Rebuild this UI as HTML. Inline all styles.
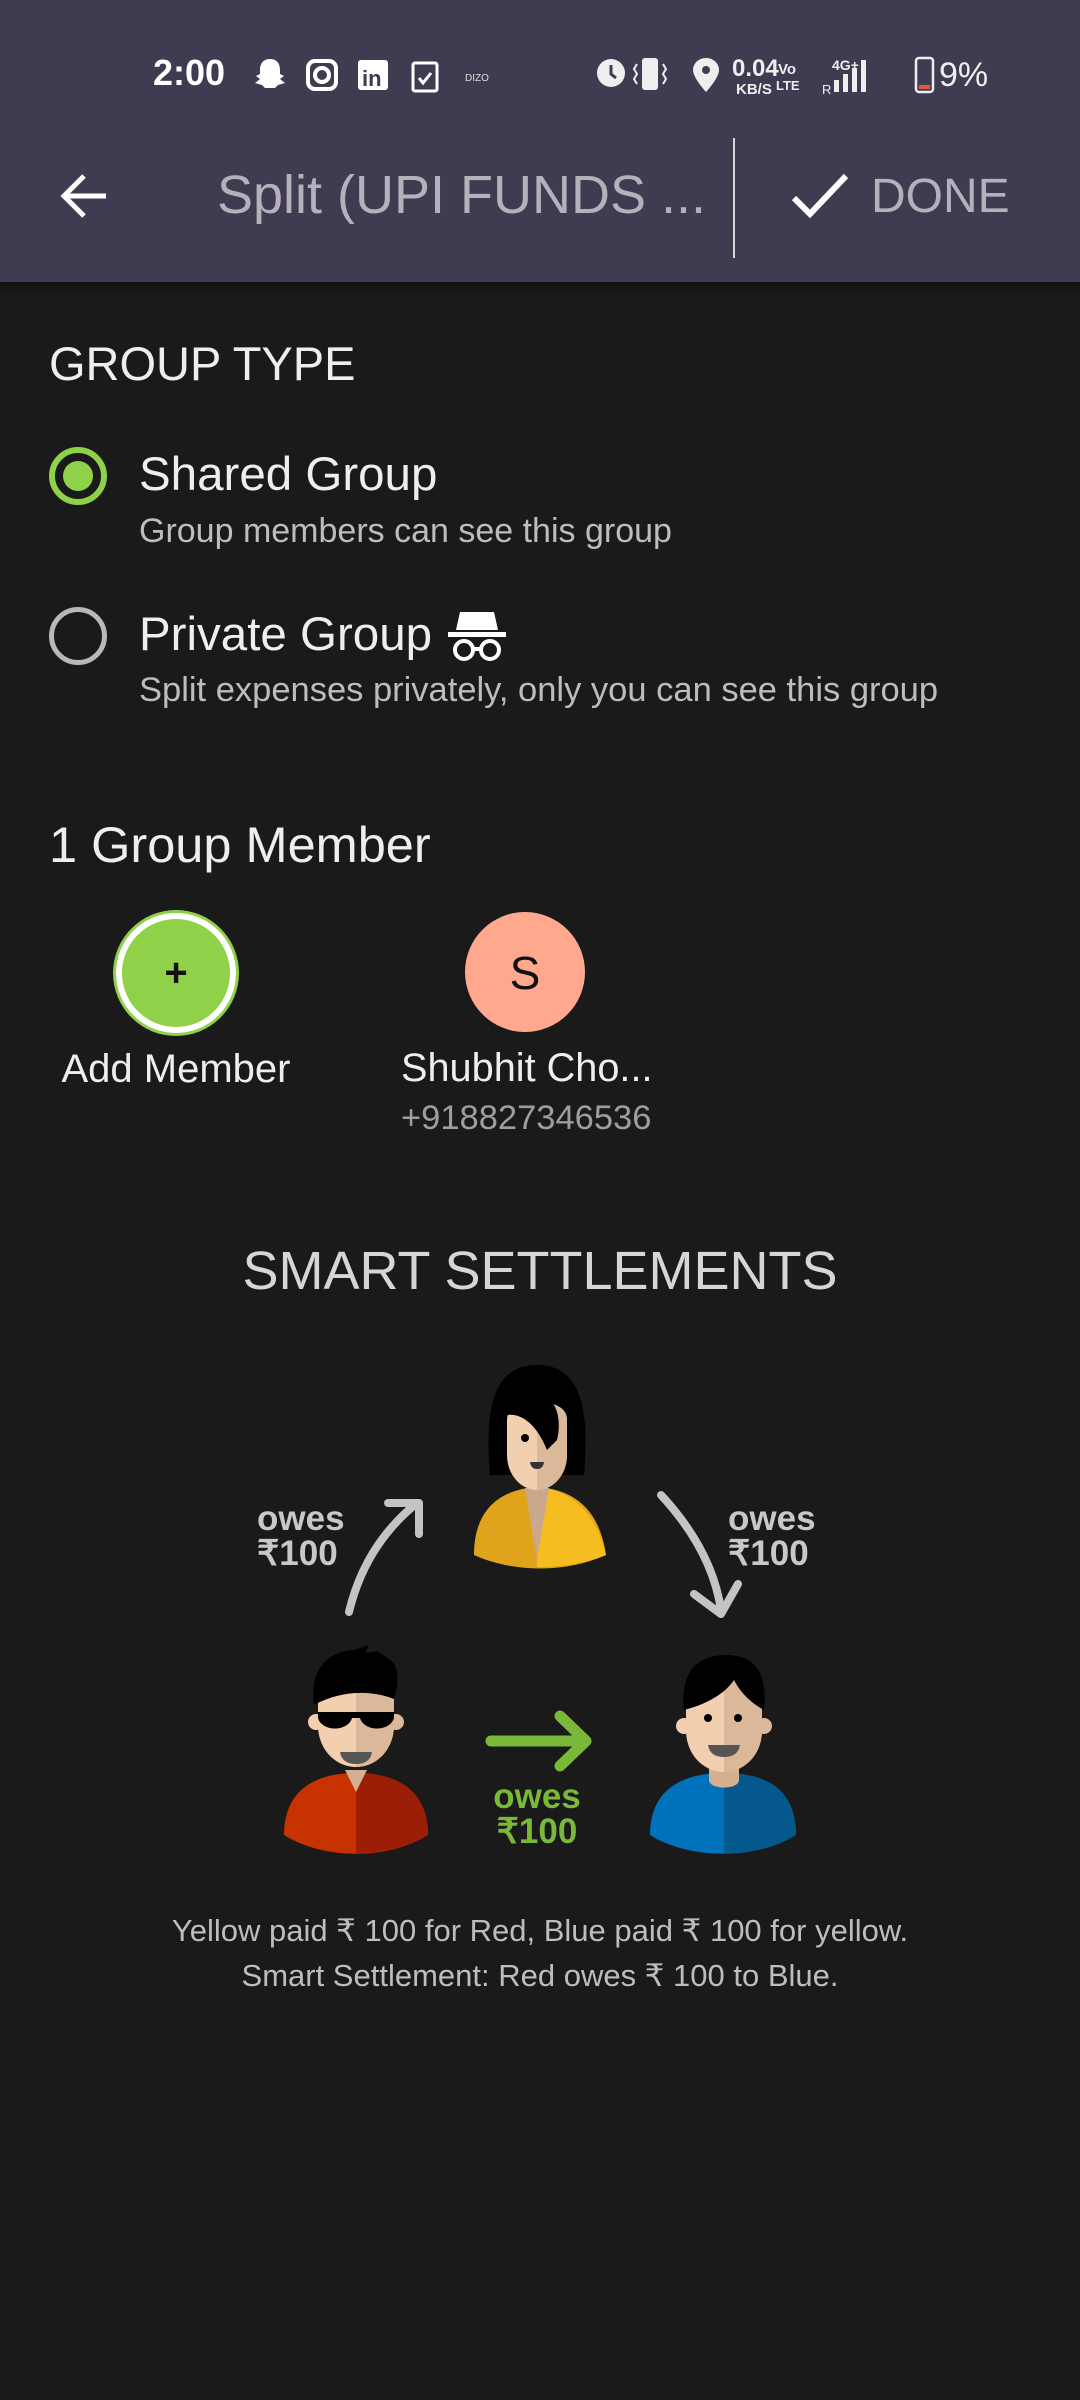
<!DOCTYPE html>
<html><head><meta charset="utf-8"><style>
*{margin:0;padding:0;box-sizing:border-box}
body{width:1080px;height:2400px;background:#1a1a1a;font-family:"Liberation Sans",sans-serif;position:relative;overflow:hidden;color:#e8e8e8}
.t{position:absolute;white-space:nowrap;line-height:1}
.bar{position:absolute;left:0;top:0;width:1080px;height:282px;background:#413b52}
.shadow{position:absolute;left:0;top:282px;width:1080px;height:14px;background:linear-gradient(#101010,#1a1a1a)}
</style></head><body>
<div class="bar"></div><div class="shadow"></div>
<!-- status bar -->
<div class="t" style="left:153px;top:55px;font-size:36px;color:#fff;font-weight:bold">2:00</div>
<svg style="position:absolute;left:250px;top:55px" width="240" height="40" viewBox="0 0 240 40">
 <path d="M20 4c-7 0-10 5-10 11v4l-4 2 4 3-5 4 7 2 3 3h10l3-3 7-2-5-4 4-3-4-2v-4c0-6-3-11-10-11z" fill="#fff"/>
 <rect x="58" y="6" width="28" height="28" rx="7" fill="none" stroke="#fff" stroke-width="4"/><circle cx="72" cy="20" r="7" fill="none" stroke="#fff" stroke-width="4"/>
 <rect x="108" y="5" width="30" height="30" rx="3" fill="#fff"/><text x="112" y="31" font-size="22" font-weight="bold" fill="#413b52" font-family="Liberation Sans">in</text>
 <rect x="163" y="8" width="24" height="28" rx="2" fill="none" stroke="#fff" stroke-width="3"/><path d="M169 23l4 5 8-10" stroke="#fff" stroke-width="3" fill="none"/>
 <text x="215" y="26" font-size="10" fill="#ddd" font-family="Liberation Sans">DIZO</text>
</svg>
<svg style="position:absolute;left:592px;top:52px" width="400" height="46" viewBox="0 0 400 46">
 <circle cx="19" cy="21" r="14" fill="#eee"/><path d="M19 13v9l5 4" stroke="#413b52" stroke-width="3" fill="none"/>
 <rect x="50" y="6" width="16" height="32" rx="3" fill="#eee"/><path d="M45 12l-3 5 3 5-3 5 3 5M71 12l3 5-3 5 3 5-3 5" stroke="#eee" stroke-width="2" fill="none"/>
 <path d="M114 6c-8 0-13 6-13 12 0 8 13 22 13 22s13-14 13-22c0-6-5-12-13-12z" fill="#eee"/><circle cx="114" cy="18" r="4" fill="#413b52"/>
 <text x="140" y="24" font-size="24" font-weight="bold" fill="#eee" font-family="Liberation Sans">0.04</text>
 <text x="144" y="42" font-size="15" font-weight="bold" fill="#eee" font-family="Liberation Sans">KB/S</text>
 <text x="186" y="22" font-size="15" font-weight="bold" fill="#eee" font-family="Liberation Sans">Vo</text>
 <text x="184" y="38" font-size="13" font-weight="bold" fill="#eee" font-family="Liberation Sans">LTE</text>
 <text x="230" y="42" font-size="13" fill="#eee" font-family="Liberation Sans">R</text>
 <text x="240" y="18" font-size="14" font-weight="bold" fill="#eee" font-family="Liberation Sans">4G+</text>
 <rect x="242" y="28" width="5" height="12" fill="#eee"/><rect x="251" y="22" width="5" height="18" fill="#eee"/><rect x="260" y="16" width="5" height="24" fill="#eee"/><rect x="269" y="8" width="5" height="32" fill="#eee"/>
 <rect x="324" y="6" width="17" height="34" rx="3" fill="none" stroke="#eee" stroke-width="2.5"/><rect x="327" y="33" width="11" height="4" fill="#e05a3a"/>
 <text x="347" y="34" font-size="34" fill="#eee" font-family="Liberation Sans">9%</text>
</svg>
<!-- toolbar -->
<svg style="position:absolute;left:58px;top:172px" width="52" height="48" viewBox="0 0 52 48"><path d="M48 24H6M26 4L6 24l20 20" stroke="#fff" stroke-width="5" fill="none"/></svg>
<div class="t" style="left:217px;top:168px;font-size:54px;color:#b4b1bb">Split (UPI FUNDS ...</div>
<div style="position:absolute;left:733px;top:138px;width:2px;height:120px;background:#d8d6dc"></div>
<svg style="position:absolute;left:790px;top:170px" width="60" height="52" viewBox="0 0 60 52"><path d="M4 28l16 16L56 6" stroke="#fff" stroke-width="6" fill="none"/></svg>
<div class="t" style="left:871px;top:173px;font-size:48px;color:#b4b1bb">DONE</div>
<!-- group type -->
<div class="t" style="left:49px;top:340px;font-size:47px;color:#eee">GROUP TYPE</div>
<div style="position:absolute;left:49px;top:447px;width:58px;height:58px;border-radius:50%;border:6px solid #8fd24a"></div>
<div style="position:absolute;left:63px;top:461px;width:30px;height:30px;border-radius:50%;background:#8fd24a"></div>
<div class="t" style="left:139px;top:451px;font-size:47.5px;color:#eee">Shared Group</div>
<div class="t" style="left:139px;top:514px;font-size:34px;color:#bdbdbd">Group members can see this group</div>
<div style="position:absolute;left:49px;top:607px;width:58px;height:58px;border-radius:50%;border:5px solid #b8b8b8"></div>
<div class="t" style="left:139px;top:611px;font-size:47.5px;color:#eee">Private Group</div>
<svg style="position:absolute;left:446px;top:608px" width="62" height="56" viewBox="0 0 62 56"><path d="M14 4h34l4 18H10z" fill="#fff"/><rect x="2" y="24" width="58" height="5" fill="#fff"/><circle cx="18" cy="42" r="9" fill="none" stroke="#fff" stroke-width="4"/><circle cx="44" cy="42" r="9" fill="none" stroke="#fff" stroke-width="4"/><path d="M27 41h8" stroke="#fff" stroke-width="4"/></svg>
<div class="t" style="left:139px;top:673px;font-size:34.5px;color:#bdbdbd">Split expenses privately, only you can see this group</div>
<!-- members -->
<div class="t" style="left:49px;top:820px;font-size:50.5px;color:#eee">1 Group Member</div>
<div style="position:absolute;left:116px;top:913px;width:120px;height:120px;border-radius:50%;background:#8fd24a;border:6px solid #fff;box-shadow:0 0 0 3px #8fd24a"></div>
<div class="t" style="left:116px;top:953px;width:120px;text-align:center;font-size:40px;font-weight:bold;color:#111">+</div>
<div class="t" style="left:26px;top:1049px;width:300px;text-align:center;font-size:40px;color:#eee">Add Member</div>
<div style="position:absolute;left:465px;top:912px;width:120px;height:120px;border-radius:50%;background:#ffa88e"></div>
<div class="t" style="left:465px;top:950px;width:120px;text-align:center;font-size:46px;color:#111">S</div>
<div class="t" style="left:401px;top:1049px;font-size:39.7px;color:#eee">Shubhit Cho...</div>
<div class="t" style="left:401px;top:1101px;font-size:34.5px;color:#9e9e9e">+918827346536</div>
<!-- smart settlements -->
<div class="t" style="left:0;top:1244px;width:1080px;text-align:center;font-size:54px;color:#d6d6d6">SMART SETTLEMENTS</div>
<svg style="position:absolute;left:0;top:1330px" width="1080" height="580" viewBox="0 1330 1080 580" font-family="Liberation Sans">
 <!-- woman -->
 <path d="M490 1475c-5-60 0-110 47-110s52 50 47 110z" fill="#000"/>
 <path d="M474 1555c0-40 20-65 63-68 43 3 63 28 69 68-40 18-92 18-132 0z" fill="#e0a41c"/>
 <path d="M537 1487c28 2 58 20 69 68-20 8-45 12-69 12z" fill="#f6bd20"/>
 <path d="M525 1488l12 72 12-72z" fill="#c9a88e"/>
 <path d="M507 1420c0-12 12-18 30-18s30 6 30 18v35c0 20-14 35-30 35s-30-15-30-35z" fill="#f2cfae"/>
 <path d="M537 1402c18 0 30 6 30 18v35c0 20-14 35-30 35z" fill="#dcb89a"/>
 <path d="M507 1415c15-2 30 10 40 35l10-10c5-20 0-45-20-45-18 0-28 8-30 20z" fill="#000"/>
 <circle cx="525" cy="1438" r="4" fill="#000"/><path d="M530 1462h14q-1 7-7 7t-7-7z" fill="#333"/>
 <!-- arrows -->
 <path d="M349 1612Q365 1545 417 1503" stroke="#c4c4c4" stroke-width="8" fill="none" stroke-linecap="round"/>
 <path d="M388 1503h31v31" stroke="#c4c4c4" stroke-width="8" fill="none" stroke-linecap="round" stroke-linejoin="round"/>
 <path d="M661 1495Q712 1550 721 1610" stroke="#c4c4c4" stroke-width="8" fill="none" stroke-linecap="round"/>
 <path d="M694 1594l27 20 17-30" stroke="#c4c4c4" stroke-width="8" fill="none" stroke-linecap="round" stroke-linejoin="round"/>
 <text x="257" y="1530" font-size="35" font-weight="bold" fill="#c8c8c8">owes</text><text x="257" y="1565" font-size="35" font-weight="bold" fill="#c8c8c8">₹100</text>
 <text x="728" y="1530" font-size="35" font-weight="bold" fill="#c8c8c8">owes</text><text x="728" y="1565" font-size="35" font-weight="bold" fill="#c8c8c8">₹100</text>
 <path d="M491 1741h95M560 1716l26 25-26 25" stroke="#7ab83a" stroke-width="11" fill="none" stroke-linecap="round" stroke-linejoin="round"/>
 <text x="537" y="1808" font-size="35" font-weight="bold" fill="#7ab83a" text-anchor="middle">owes</text><text x="537" y="1843" font-size="35" font-weight="bold" fill="#7ab83a" text-anchor="middle">₹100</text>
 <!-- red man -->
 <path d="M284 1835c0-40 25-62 72-62s72 22 72 62c-40 25-104 25-144 0z" fill="#c83200"/>
 <path d="M356 1773c47 0 72 22 72 62-20 12-45 18-72 18z" fill="#9c1e06"/>
 <path d="M345 1770h22l-11 22z" fill="#d4b090"/>
 <circle cx="316" cy="1722" r="8" fill="#f2cfae"/><circle cx="396" cy="1722" r="8" fill="#dcb89a"/>
 <path d="M318 1690c0-22 16-30 38-30s38 8 38 30v35c0 25-18 42-38 42s-38-17-38-42z" fill="#f2cfae"/>
 <path d="M356 1660c22 0 38 8 38 30v35c0 25-18 42-38 42z" fill="#dcb89a"/>
 <path d="M314 1705c-6-40 20-55 40-55l15-5-4 8 12-2 15 10c8 10 6 25 2 38-20-8-50-10-80 6z" fill="#000"/>
 <path d="M318 1712h76v6c-4 14-30 14-34 0h-8c-4 14-30 14-34 0z" fill="#000"/>
 <path d="M340 1752h32q-2 12-16 12t-16-12z" fill="#555"/>
 <!-- blue man -->
 <path d="M650 1835c0-40 25-62 74-62s72 22 72 62c-40 25-106 25-146 0z" fill="#0072bc"/>
 <path d="M724 1773c47 0 72 22 72 62-20 12-45 18-72 18z" fill="#04588c"/>
 <path d="M709 1760h30v20c0 10-30 10-30 0z" fill="#d4b090"/>
 <circle cx="684" cy="1726" r="8" fill="#f2cfae"/><circle cx="764" cy="1726" r="8" fill="#dcb89a"/>
 <path d="M686 1700c0-25 16-35 38-35s38 10 38 35v30c0 25-18 42-38 42s-38-17-38-42z" fill="#f2cfae"/>
 <path d="M724 1665c22 0 38 10 38 35v30c0 25-18 42-38 42z" fill="#dcb89a"/>
 <path d="M684 1710c-4-40 15-55 42-55s42 15 38 55c-15-8-25-20-30-30-10 15-30 25-50 30z" fill="#000"/>
 <circle cx="708" cy="1718" r="4" fill="#000"/><circle cx="738" cy="1718" r="4" fill="#000"/>
 <path d="M708 1745h32q-2 12-16 12t-16-12z" fill="#555"/>
</svg>
<div class="t" style="left:0;top:1915px;width:1080px;text-align:center;font-size:31px;color:#bdbdbd">Yellow paid ₹ 100 for Red, Blue paid ₹ 100 for yellow.</div>
<div class="t" style="left:0;top:1960px;width:1080px;text-align:center;font-size:31px;color:#bdbdbd">Smart Settlement: Red owes ₹ 100 to Blue.</div>
</body></html>
